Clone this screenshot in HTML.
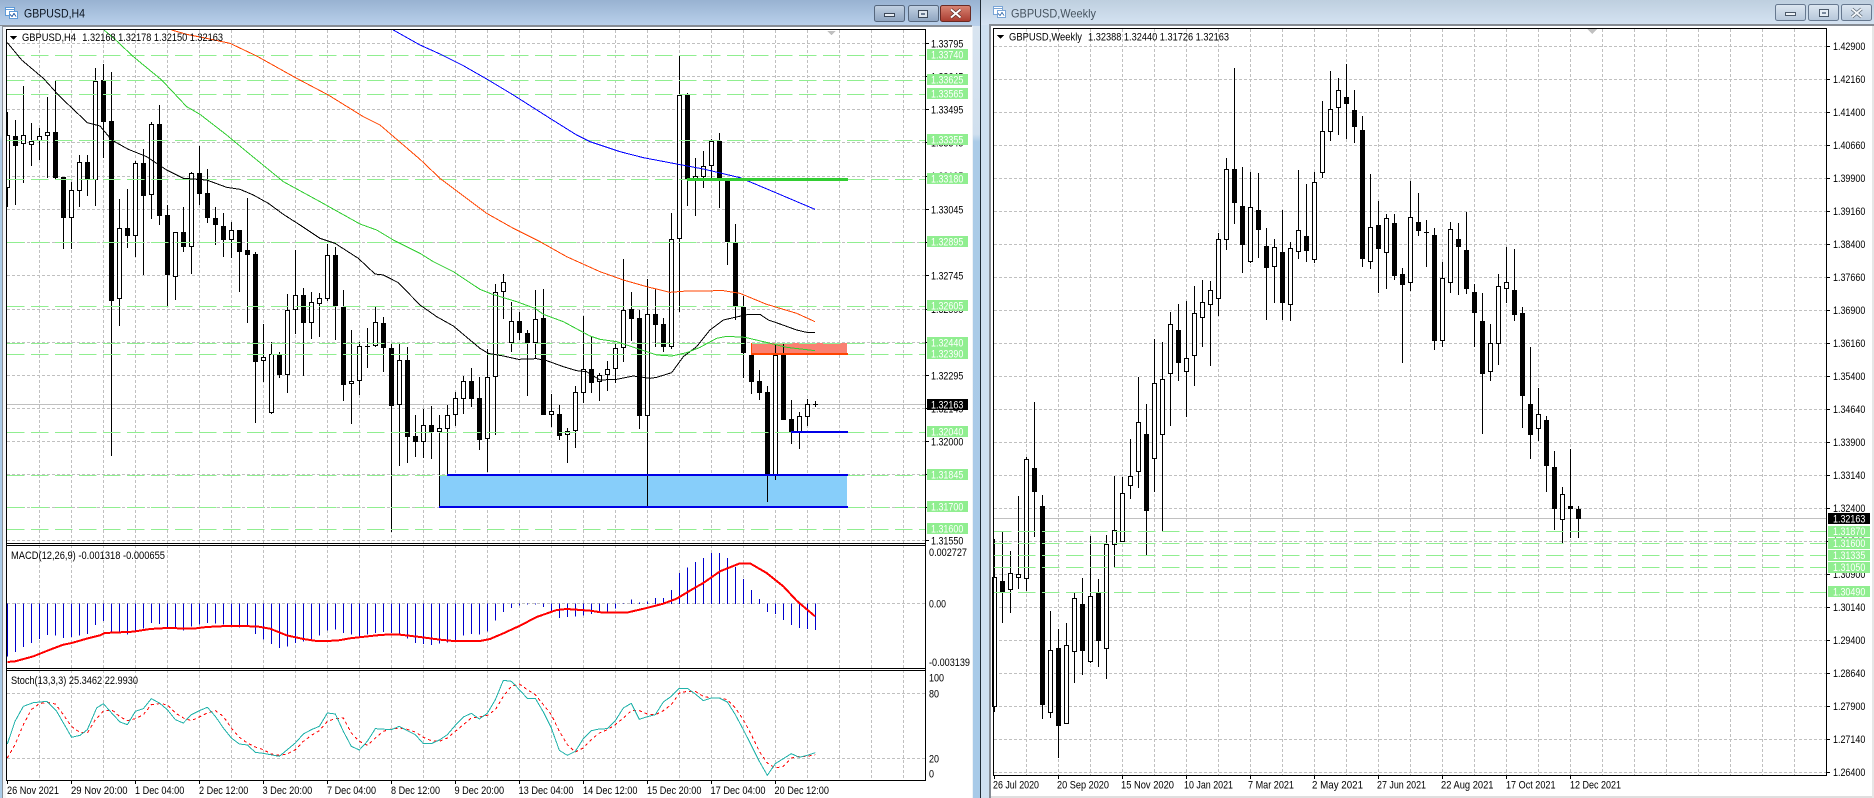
<!DOCTYPE html>
<html><head><meta charset="utf-8"><title>GBPUSD</title>
<style>html,body{margin:0;padding:0;background:#fff;width:1874px;height:798px;overflow:hidden}svg{display:block}text{font-family:"Liberation Sans",sans-serif;font-size:11px;fill:#000}.g text{fill:#fff}</style></head><body>
<svg width="1874" height="798" viewBox="0 0 1874 798" xmlns="http://www.w3.org/2000/svg">
<defs>
<linearGradient id="t1" x1="0" y1="0" x2="0" y2="1"><stop offset="0" stop-color="#98b2d1"/><stop offset="1" stop-color="#bad1eb"/></linearGradient>
<linearGradient id="t2" x1="0" y1="0" x2="0" y2="1"><stop offset="0" stop-color="#becfdf"/><stop offset="1" stop-color="#d5e3f2"/></linearGradient>
<linearGradient id="s" x1="0" y1="0" x2="0" y2="1"><stop offset="0" stop-color="#d8e4f0"/><stop offset=".14" stop-color="#d0dfee"/><stop offset=".15" stop-color="#abcbe7"/><stop offset="1" stop-color="#a8cae8"/></linearGradient>
<linearGradient id="b1" x1="0" y1="0" x2="0" y2="1"><stop offset="0" stop-color="#c3d2e3"/><stop offset="1" stop-color="#8ea4c0"/></linearGradient>
<linearGradient id="b2" x1="0" y1="0" x2="0" y2="1"><stop offset="0" stop-color="#dde7f1"/><stop offset="1" stop-color="#b6c7da"/></linearGradient>
<linearGradient id="b3" x1="0" y1="0" x2="0" y2="1"><stop offset="0" stop-color="#d98574"/><stop offset="1" stop-color="#a93c30"/></linearGradient>
</defs>
<rect width="1874" height="798" fill="#fff"/>
<!-- window chrome -->
<rect x="0" y="0" width="980" height="26" fill="url(#t1)"/>
<rect x="981" y="0" width="893" height="25" fill="url(#t2)"/>
<rect x="0" y="25" width="972" height="2" fill="#868c94"/>
<rect x="989" y="24" width="885" height="2" fill="#868c94"/>
<rect x="0" y="26" width="2" height="772" fill="url(#s)"/>
<rect x="2" y="26" width="1" height="772" fill="#8a9098"/>
<rect x="972" y="26" width="1" height="772" fill="#eef2f6"/>
<rect x="973" y="26" width="7" height="772" fill="url(#s)"/>
<rect x="980" y="0" width="1" height="798" fill="#1f2a33"/>
<rect x="981" y="25" width="8" height="773" fill="#cfe0f0"/>
<rect x="989" y="24" width="2" height="774" fill="#868c94"/>
<rect x="991" y="796" width="883" height="2" fill="#dfdfdf"/>
<rect x="1872" y="26" width="2" height="772" fill="#e6e6e6"/>
<!-- title icons -->
<g shape-rendering="crispEdges" fill="#fff" stroke="#5f9bd8"><rect x="5.5" y="7.5" width="9" height="8"/><rect x="9.5" y="11.5" width="8" height="7"/><path d="M6 9.5h8" fill="none"/><path d="M10 14.5l2 2 2-3 2 3" fill="none" stroke="#3f6fb0"/></g>
<g shape-rendering="crispEdges" fill="#fff" stroke="#7aa5d6"><rect x="993.5" y="6.5" width="9" height="8"/><rect x="997.5" y="10.5" width="8" height="7"/><path d="M994 8.5h8" fill="none"/><path d="M998 13.5l2 2 2-3 2 3" fill="none" stroke="#5a86bb"/></g>
<text x="24" y="17.5" style="font-size:12px;fill:#0b1420" textLength="61" lengthAdjust="spacingAndGlyphs">GBPUSD,H4</text>
<text x="1011" y="17.5" style="font-size:12px;fill:#46535f" textLength="85" lengthAdjust="spacingAndGlyphs">GBPUSD,Weekly</text>
<!-- buttons left -->
<rect x="874.5" y="5.5" width="30" height="16" rx="2" fill="url(#b1)" stroke="#56677d"/>
<rect x="908.5" y="5.5" width="30" height="16" rx="2" fill="url(#b1)" stroke="#56677d"/>
<rect x="940.5" y="5.5" width="30" height="16" rx="2" fill="url(#b3)" stroke="#6a2a24"/>
<rect x="884.5" y="13.5" width="10" height="3" fill="#e8eef5" stroke="#3b4757"/>
<rect x="918.5" y="10.5" width="9" height="7" fill="#dfe6ee" stroke="#3b4757"/><rect x="921" y="13" width="4" height="2" fill="#6b7c92"/>
<path d="M951 9.5l9.5 8M960.5 9.5l-9.5 8" stroke="#5a2a25" stroke-width="3.4" fill="none"/><path d="M951 9.5l9.5 8M960.5 9.5l-9.5 8" stroke="#fff" stroke-width="2" fill="none"/>
<!-- buttons right -->
<rect x="1775.5" y="4.5" width="30" height="16" rx="2" fill="url(#b2)" stroke="#66788f"/>
<rect x="1808.5" y="4.5" width="30" height="16" rx="2" fill="url(#b2)" stroke="#66788f"/>
<rect x="1841.5" y="4.5" width="30" height="16" rx="2" fill="url(#b2)" stroke="#66788f"/>
<rect x="1785.5" y="12.5" width="10" height="3" fill="#eef3f8" stroke="#4a5868"/>
<rect x="1819.5" y="9.5" width="9" height="7" fill="#e6edf4" stroke="#4a5868"/><rect x="1822" y="12" width="4" height="2" fill="#7a8a9e"/>
<path d="M1852 9l9.5 8M1861.5 9l-9.5 8" stroke="#55626f" stroke-width="3.2" fill="none"/><path d="M1852 9l9.5 8M1861.5 9l-9.5 8" stroke="#f4f7fa" stroke-width="1.8" fill="none"/>

<!-- LEFT CHART GRID -->
<g shape-rendering="crispEdges" fill="none">
<path stroke="#c0c0c0" stroke-dasharray="3 2" d="M39.5 30V780M71.5 30V780M103.5 30V780M135.5 30V780M167.5 30V780M199.5 30V780M231.5 30V780M263.5 30V780M295.5 30V780M327.5 30V780M359.5 30V780M391.5 30V780M423.5 30V780M455.5 30V780M487.5 30V780M519.5 30V780M551.5 30V780M583.5 30V780M615.5 30V780M647.5 30V780M679.5 30V780M711.5 30V780M743.5 30V780M775.5 30V780M807.5 30V780M839.5 30V780M871.5 30V780M903.5 30V780M7 43.5H925M7 76.5H925M7 109.5H925M7 142.5H925M7 176.5H925M7 209.5H925M7 242.5H925M7 275.5H925M7 309.5H925M7 342.5H925M7 375.5H925M7 408.5H925M7 441.5H925M7 474.5H925M7 507.5H925M7 540.5H925M7 603.5H925M7 693.5H925M7 758.5H925"/>
<path stroke="#c0c0c0" d="M7 404.5H925"/>
<rect x="439" y="475" width="408" height="32" fill="#87cefa"/>
<rect x="751" y="343" width="96" height="11" fill="#fa8072"/>
<!-- candles -->
<path stroke="#000" d="M7.5 112V207M15.5 120V205M23.5 86V183M31.5 123V166M39.5 128V160M47.5 97V178M55.5 81V179M63.5 177V249M71.5 182V249M79.5 155V207M87.5 155V196M95.5 68V206M103.5 64V158M111.5 72V456M119.5 199V326M127.5 189V248M135.5 161V257M143.5 149V275M151.5 122V219M159.5 105V225M167.5 205V307M175.5 232V300M183.5 207V252M191.5 172V274M199.5 146V205M207.5 169V223M215.5 207V245M223.5 213V257M231.5 222V258M239.5 230V292M247.5 198V323M255.5 252V423M263.5 324V382M271.5 342V414M279.5 352V378M287.5 294V393M295.5 250V334M303.5 288V376M311.5 292V339M319.5 293V337M327.5 244V301M335.5 247V340M343.5 290V401M351.5 330V424M359.5 342V395M367.5 328V368M365 346.5h5M375.5 307V347M383.5 317V372M391.5 343V532M399.5 344V466M407.5 347V463M415.5 415V457M423.5 409V458M431.5 406V459M439.5 415V507M447.5 405V475M455.5 392V426M463.5 376V414M471.5 368V407M479.5 377V450M487.5 349V472M495.5 284V435M503.5 274V319M511.5 302V352M519.5 312V340M527.5 330V396M535.5 290V359M543.5 289V415M551.5 394V427M559.5 405V440M567.5 428V463M575.5 386V448M583.5 316V403M591.5 337V393M599.5 373V401M607.5 361V391M615.5 344V383M623.5 259V362M631.5 292V341M639.5 310V429M647.5 279V506M655.5 289V347M663.5 318V352M671.5 213V349M679.5 56V312M687.5 93V206M695.5 158V216M703.5 151V188M711.5 139V180M719.5 133V208M727.5 181V265M735.5 224V320M743.5 296V378M751.5 343V394M759.5 370V400M767.5 386V502M775.5 343V480M783.5 343V420M791.5 400V444M799.5 412V449M807.5 399V426M815.5 401V407M813 404.5h5"/>
<path stroke="#000" stroke-width="5" d="M7.5 135V188M15.5 136V146M23.5 135V144M31.5 141V145M39.5 136V141M47.5 132V136M55.5 132V178M63.5 177V218M71.5 190V218M79.5 162V191M87.5 162V180M95.5 81V180M103.5 80V122M111.5 121V301M119.5 228V299M127.5 228V236M135.5 163V236M143.5 163V196M151.5 124V195M159.5 124V216M167.5 215V275M175.5 232V277M183.5 232V247M191.5 173V247M199.5 173V194M207.5 193V218M215.5 218V225M223.5 226V240M231.5 230V240M239.5 230V252M247.5 250V255M255.5 254V362M263.5 357V361M271.5 354V413M279.5 355V375M287.5 310V375M295.5 295V310M303.5 295V323M311.5 302V323M319.5 298V304M327.5 255V299M335.5 255V306M343.5 307V385M351.5 381V384M359.5 346V381M375.5 322V346M383.5 323V348M391.5 348V406M399.5 360V405M407.5 360V437M415.5 436V442M423.5 425V442M431.5 425V432M439.5 428V432M447.5 415V429M455.5 398V415M463.5 381V399M471.5 381V399M479.5 398V440M487.5 377V439M495.5 292V377M503.5 282V292M511.5 321V343M519.5 321V333M527.5 333V343M535.5 319V343M543.5 318V415M551.5 411V415M559.5 414V436M567.5 431V435M575.5 392V431M583.5 369V393M591.5 369V383M599.5 375V382M607.5 369V375M615.5 348V369M623.5 310V348M631.5 309V319M639.5 318V416M647.5 314V416M655.5 314V325M663.5 324V347M671.5 239V347M679.5 95V239M687.5 95V179M695.5 176V179M703.5 166V177M711.5 141V166M719.5 141V181M727.5 181V242M735.5 243V306M743.5 307V353M751.5 355V382M759.5 381V393M767.5 392V475M775.5 355V475M783.5 355V420M791.5 419V432M799.5 416V432M807.5 404V417"/>
<path stroke="#fff" stroke-width="3" d="M7.5 136V187M23.5 136V143M31.5 142V144M39.5 137V140M47.5 133V135M71.5 191V217M79.5 163V190M95.5 82V179M119.5 229V298M135.5 164V235M151.5 125V194M175.5 233V276M191.5 174V246M231.5 231V239M263.5 358V360M271.5 355V412M287.5 311V374M295.5 296V309M311.5 303V322M319.5 299V303M327.5 256V298M351.5 382V383M359.5 347V380M375.5 323V345M399.5 361V404M423.5 426V441M439.5 429V431M447.5 416V428M455.5 399V414M463.5 382V398M487.5 378V438M495.5 293V376M503.5 283V291M511.5 322V342M535.5 320V342M551.5 412V414M567.5 432V434M575.5 393V430M583.5 370V392M599.5 376V381M607.5 370V374M615.5 349V368M623.5 311V347M647.5 315V415M671.5 240V346M679.5 96V238M695.5 177V178M703.5 167V176M711.5 142V165M775.5 356V474M799.5 417V431M807.5 405V416"/>
<!-- levels -->
<path stroke="#90ee90" stroke-dasharray="17.5 6.5" d="M7 55.5H925M7 80.5H925M7 94.5H925M7 140.5H925M7 179.5H925M7 242.5H925M7 306.5H925M7 343.5H925M7 354.5H925M7 432.5H925M7 475.5H925M7 507.5H925M7 529.5H925"/>
<!-- MAs (zoom-space) -->
<g transform="scale(.33333)" stroke-width="3" stroke-linejoin="round">
<polyline stroke="#000" points="22,128 65,180 130,235 180,290 262,368 300,378 335,420 385,448 440,470 500,510 550,535 620,540 680,562 720,568 760,585 805,610 850,643 900,675 960,715 1005,730 1075,775 1125,822 1150,825 1195,848 1260,915 1310,950 1360,978 1410,1020 1440,1045 1465,1060 1510,1068 1555,1078 1610,1076 1640,1082 1690,1100 1730,1112 1760,1115 1800,1140 1850,1138 1900,1128 1950,1135 1970,1132 2015,1118 2050,1070 2090,1040 2130,990 2170,960 2205,952 2245,943 2280,943 2305,960 2340,972 2390,990 2420,997 2445,997"/>
<polyline stroke="#32cd32" points="312,90 345,118 400,170 485,240 560,320 600,343 680,405 740,455 850,545 960,605 1080,672 1130,690 1180,720 1260,760 1300,785 1360,815 1440,868 1475,882 1550,905 1605,925 1630,943 1690,965 1770,1008 1800,1018 1850,1025 1910,1045 1970,1065 2015,1068 2060,1058 2100,1042 2150,1015 2180,1009 2235,1012 2290,1025 2360,1042 2445,1052"/>
<polyline stroke="#ff4500" points="515,90 560,103 620,115 690,130 770,168 890,235 985,285 1090,350 1140,375 1210,435 1260,478 1320,535 1380,580 1460,640 1540,685 1620,725 1700,770 1800,815 1870,840 1940,860 2010,877 2060,873 2170,872 2220,880 2300,913 2390,940 2445,965"/>
<polyline stroke="#0000ff" points="1180,90 1260,135 1320,162 1390,197 1460,237 1540,285 1650,355 1730,405 1770,425 1860,455 1930,473 2030,492 2110,507 2220,533 2320,575 2445,628"/>
</g>
<!-- objects -->
<rect x="687" y="178" width="161" height="3" fill="#32cd32"/>
<rect x="751" y="353" width="97" height="2" fill="#ff4500"/><rect x="751" y="343" width="1" height="11" fill="#ff4500"/>
<rect x="447" y="474" width="401" height="2" fill="#0000e6"/>
<rect x="439" y="506" width="409" height="2" fill="#0000e6"/>
<rect x="791" y="431" width="57" height="2" fill="#0000e6"/>
<!-- MACD + Stoch -->
<g transform="translate(0,528) scale(.33333)" stroke-width="3">
<path stroke="#0000cd" d="M22.5 226V385M46.5 226V372M70.5 226V357M94.5 226V345M118.5 226V333M142.5 226V321M166.5 226V323M190.5 226V330M214.5 226V327M238.5 226V322M262.5 226V318M286.5 226V291M310.5 226V279M334.5 226V310M358.5 226V310M382.5 226V320M406.5 226V312M430.5 226V302M454.5 226V285M478.5 226V288M502.5 226V298M526.5 226V302M550.5 226V308M574.5 226V295M598.5 226V290M622.5 226V285M646.5 226V287M670.5 226V290M694.5 226V292M718.5 226V298M742.5 226V292M766.5 226V318M790.5 226V335M814.5 226V348M838.5 226V360M862.5 226V355M886.5 226V345M910.5 226V340M934.5 226V335M958.5 226V323M982.5 226V308M1006.5 226V305M1030.5 226V315M1054.5 226V320M1078.5 226V325M1102.5 226V320M1126.5 226V315M1150.5 226V312M1174.5 226V315M1198.5 226V322M1222.5 226V332M1246.5 226V345M1270.5 226V348M1294.5 226V351M1318.5 226V347M1342.5 226V344M1366.5 226V342M1390.5 226V323M1414.5 226V318M1438.5 226V320M1462.5 226V310M1486.5 226V278M1510.5 226V252M1534.5 226V240M1558.5 226V232M1582.5 226V229M1606.5 226V229M1630.5 226V237M1654.5 226V250M1678.5 226V270M1702.5 226V267M1726.5 226V265M1750.5 226V262M1774.5 226V258M1798.5 226V250M1822.5 226V250M1846.5 226V241M1870.5 226V228M1894.5 228V215M1918.5 228V224M1942.5 228V220M1966.5 228V210M1990.5 228V210M2014.5 228V186M2038.5 228V135M2062.5 228V118M2086.5 228V102M2110.5 228V90M2134.5 228V75M2158.5 228V75M2182.5 228V90M2206.5 228V117M2230.5 228V153M2254.5 228V186M2278.5 228V213M2302.5 226V252M2326.5 226V258M2350.5 226V276M2374.5 226V291M2398.5 226V300M2422.5 226V303M2446.5 226V306"/>
<polyline stroke="#ff0000" stroke-width="6" points="22,402 45,400 100,385 150,365 190,350 215,345 260,332 300,322 315,315 400,311 450,303 500,300 580,302 620,297 680,294 770,295 810,302 860,322 910,333 950,339 1010,338 1050,331 1130,322 1170,319 1200,320 1260,327 1320,335 1360,339 1440,339 1470,333 1510,316 1560,293 1610,267 1670,246 1700,243 1770,248 1810,254 1880,254 1940,240 1990,227 2030,212 2080,182 2110,165 2160,130 2220,106 2250,106 2300,135 2350,175 2390,218 2445,265"/>
<polyline stroke="#ff0000" stroke-dasharray="9 9" points="22,690 45,650 70,590 94,545 118,527 142,523 166,528 190,560 214,595 238,612 262,615 286,575 310,550 335,545 358,565 382,578 406,572 430,560 454,530 478,527 502,530 526,555 550,570 574,578 598,567 622,555 646,548 670,565 694,600 718,628 742,645 766,657 790,665 814,678 838,682 862,678 886,665 910,640 934,622 958,608 982,580 1006,572 1030,570 1054,615 1078,640 1102,652 1126,630 1150,610 1174,603 1198,600 1222,604 1246,612 1270,628 1294,638 1318,640 1342,630 1366,610 1390,590 1414,570 1438,567 1462,562 1486,545 1510,505 1534,475 1558,468 1582,485 1606,500 1630,530 1654,560 1678,610 1702,650 1726,672 1750,660 1774,635 1798,615 1822,605 1846,590 1870,570 1894,548 1918,548 1942,558 1966,560 1990,548 2014,530 2038,495 2062,490 2086,490 2110,505 2134,510 2158,510 2182,515 2206,540 2230,575 2254,620 2278,670 2302,705 2326,720 2350,715 2374,690 2398,685 2422,685 2446,680"/>
<polyline stroke="#20b2aa" points="22,648 45,580 70,535 100,524 140,520 170,550 215,628 240,622 262,605 290,540 310,527 335,555 360,582 382,590 406,550 430,542 454,512 478,525 502,545 526,575 550,585 574,560 598,548 622,538 646,565 670,600 694,630 718,648 742,651 766,673 790,676 838,685 862,665 886,645 910,618 934,605 958,595 982,555 1006,558 1030,610 1054,655 1078,666 1102,640 1126,602 1174,605 1198,595 1222,608 1246,620 1270,647 1294,647 1318,636 1342,620 1366,592 1390,567 1414,556 1438,573 1462,556 1486,515 1510,457 1534,460 1558,485 1582,511 1606,511 1630,552 1654,600 1678,667 1702,682 1726,670 1750,632 1774,608 1798,603 1822,602 1846,578 1870,540 1894,526 1918,574 1942,566 1966,560 1990,522 2014,505 2038,481 2062,481 2086,498 2110,518 2134,510 2158,510 2182,522 2206,560 2230,605 2254,652 2278,700 2302,742 2326,707 2350,692 2374,677 2398,688 2422,682 2446,674"/>
</g>
<!-- frames -->
<path stroke="#000" d="M6.5 29V781M925.5 29V781M6 29.5H926M6 543.5H926M6 545.5H926M6 668.5H926M6 670.5H926M6 780.5H926"/>
<rect x="3" y="27" width="3" height="771" fill="#f4f6f8"/>
<path stroke="#000" d="M925 43.5h4M925 76.5h4M925 109.5h4M925 142.5h4M925 176.5h4M925 209.5h4M925 242.5h4M925 275.5h4M925 309.5h4M925 342.5h4M925 375.5h4M925 408.5h4M925 441.5h4M925 474.5h4M925 507.5h4M925 540.5h4M7.5 781v3M71.5 781v3M135.5 781v3M199.5 781v3M263.5 781v3M327.5 781v3M391.5 781v3M455.5 781v3M519.5 781v3M583.5 781v3M647.5 781v3M711.5 781v3M775.5 781v3"/>
<path d="M10 36h7l-3.5 4z" fill="#000" stroke="none"/>
<path d="M827 31h9l-4.5 4z" fill="#c0c0c0" stroke="none"/>
</g>
<!-- left text -->
<text x="22" y="41" textLength="54" lengthAdjust="spacingAndGlyphs">GBPUSD,H4</text>
<text x="82.3" y="41" textLength="140.7" lengthAdjust="spacingAndGlyphs">1.32168 1.32178 1.32150 1.32163</text>
<text x="11" y="559" textLength="154" lengthAdjust="spacingAndGlyphs">MACD(12,26,9) -0.001318 -0.000655</text>
<text x="11" y="684" textLength="127" lengthAdjust="spacingAndGlyphs">Stoch(13,3,3) 25.3462 22.9930</text>
<g>
<text x="931" y="47.5" textLength="32.3" lengthAdjust="spacingAndGlyphs">1.33795</text>
<text x="931" y="80.5" textLength="32.3" lengthAdjust="spacingAndGlyphs">1.33645</text>
<text x="931" y="113.5" textLength="32.3" lengthAdjust="spacingAndGlyphs">1.33495</text>
<text x="931" y="146.5" textLength="32.3" lengthAdjust="spacingAndGlyphs">1.33345</text>
<text x="931" y="180" textLength="32.3" lengthAdjust="spacingAndGlyphs">1.33195</text>
<text x="931" y="213.5" textLength="32.3" lengthAdjust="spacingAndGlyphs">1.33045</text>
<text x="931" y="246.5" textLength="32.3" lengthAdjust="spacingAndGlyphs">1.32895</text>
<text x="931" y="279.5" textLength="32.3" lengthAdjust="spacingAndGlyphs">1.32745</text>
<text x="931" y="313" textLength="32.3" lengthAdjust="spacingAndGlyphs">1.32595</text>
<text x="931" y="346" textLength="32.3" lengthAdjust="spacingAndGlyphs">1.32445</text>
<text x="931" y="379.5" textLength="32.3" lengthAdjust="spacingAndGlyphs">1.32295</text>
<text x="931" y="412.5" textLength="32.3" lengthAdjust="spacingAndGlyphs">1.32145</text>
<text x="931" y="445.5" textLength="32.3" lengthAdjust="spacingAndGlyphs">1.32000</text>
<text x="931" y="478.5" textLength="32.3" lengthAdjust="spacingAndGlyphs">1.31850</text>
<text x="931" y="511.5" textLength="32.3" lengthAdjust="spacingAndGlyphs">1.31700</text>
<text x="931" y="544.5" textLength="32.3" lengthAdjust="spacingAndGlyphs">1.31550</text>
<text x="929" y="556" textLength="38" lengthAdjust="spacingAndGlyphs">0.002727</text>
<text x="929" y="607.5" textLength="17" lengthAdjust="spacingAndGlyphs">0.00</text>
<text x="929" y="666" textLength="41" lengthAdjust="spacingAndGlyphs">-0.003139</text>
<text x="929" y="681.5" textLength="15" lengthAdjust="spacingAndGlyphs">100</text>
<text x="929" y="697.5" textLength="10" lengthAdjust="spacingAndGlyphs">80</text>
<text x="929" y="762.5" textLength="10" lengthAdjust="spacingAndGlyphs">20</text>
<text x="929" y="777.5" textLength="5" lengthAdjust="spacingAndGlyphs">0</text>
<text x="7" y="794" textLength="52" lengthAdjust="spacingAndGlyphs">26 Nov 2021</text>
<text x="71" y="794" textLength="56.6" lengthAdjust="spacingAndGlyphs">29 Nov 20:00</text>
<text x="135" y="794" textLength="49.3" lengthAdjust="spacingAndGlyphs">1 Dec 04:00</text>
<text x="199" y="794" textLength="49.3" lengthAdjust="spacingAndGlyphs">2 Dec 12:00</text>
<text x="262.5" y="794" textLength="49.7" lengthAdjust="spacingAndGlyphs">3 Dec 20:00</text>
<text x="327" y="794" textLength="49" lengthAdjust="spacingAndGlyphs">7 Dec 04:00</text>
<text x="391" y="794" textLength="49" lengthAdjust="spacingAndGlyphs">8 Dec 12:00</text>
<text x="454.5" y="794" textLength="49.6" lengthAdjust="spacingAndGlyphs">9 Dec 20:00</text>
<text x="518.5" y="794" textLength="55" lengthAdjust="spacingAndGlyphs">13 Dec 04:00</text>
<text x="583" y="794" textLength="54.5" lengthAdjust="spacingAndGlyphs">14 Dec 12:00</text>
<text x="647" y="794" textLength="54.5" lengthAdjust="spacingAndGlyphs">15 Dec 20:00</text>
<text x="710.5" y="794" textLength="55" lengthAdjust="spacingAndGlyphs">17 Dec 04:00</text>
<text x="774.5" y="794" textLength="54.5" lengthAdjust="spacingAndGlyphs">20 Dec 12:00</text>
</g>
<g fill="#90ee90" shape-rendering="crispEdges"><rect x="927" y="49" width="41" height="11"/><rect x="927" y="74" width="41" height="11"/><rect x="927" y="88" width="41" height="11"/><rect x="927" y="134" width="41" height="11"/><rect x="927" y="173" width="41" height="11"/><rect x="927" y="236" width="41" height="11"/><rect x="927" y="300" width="41" height="11"/><rect x="927" y="337" width="41" height="11"/><rect x="927" y="348" width="41" height="11"/><rect x="927" y="426" width="41" height="11"/><rect x="927" y="469" width="41" height="11"/><rect x="927" y="501" width="41" height="11"/><rect x="927" y="523" width="41" height="11"/><rect x="927" y="399" width="41" height="11" fill="#000"/></g>
<g class="g">
<text x="931" y="58.5" textLength="32.3" lengthAdjust="spacingAndGlyphs">1.33740</text>
<text x="931" y="83.5" textLength="32.3" lengthAdjust="spacingAndGlyphs">1.33625</text>
<text x="931" y="97.5" textLength="32.3" lengthAdjust="spacingAndGlyphs">1.33565</text>
<text x="931" y="143.5" textLength="32.3" lengthAdjust="spacingAndGlyphs">1.33355</text>
<text x="931" y="182.5" textLength="32.3" lengthAdjust="spacingAndGlyphs">1.33180</text>
<text x="931" y="245.5" textLength="32.3" lengthAdjust="spacingAndGlyphs">1.32895</text>
<text x="931" y="309.5" textLength="32.3" lengthAdjust="spacingAndGlyphs">1.32605</text>
<text x="931" y="346.5" textLength="32.3" lengthAdjust="spacingAndGlyphs">1.32440</text>
<text x="931" y="357.5" textLength="32.3" lengthAdjust="spacingAndGlyphs">1.32390</text>
<text x="931" y="408.5" textLength="32.3" lengthAdjust="spacingAndGlyphs">1.32163</text>
<text x="931" y="435.5" textLength="32.3" lengthAdjust="spacingAndGlyphs">1.32040</text>
<text x="931" y="478.5" textLength="32.3" lengthAdjust="spacingAndGlyphs">1.31845</text>
<text x="931" y="510.5" textLength="32.3" lengthAdjust="spacingAndGlyphs">1.31700</text>
<text x="931" y="532.5" textLength="32.3" lengthAdjust="spacingAndGlyphs">1.31600</text>
</g>

<!-- RIGHT CHART -->
<g shape-rendering="crispEdges" fill="none">
<path stroke="#c0c0c0" stroke-dasharray="3 2" d="M1026.5 29V775M1058.5 29V775M1090.5 29V775M1122.5 29V775M1154.5 29V775M1186.5 29V775M1218.5 29V775M1250.5 29V775M1282.5 29V775M1314.5 29V775M1346.5 29V775M1378.5 29V775M1410.5 29V775M1442.5 29V775M1474.5 29V775M1506.5 29V775M1538.5 29V775M1570.5 29V775M1602.5 29V775M1634.5 29V775M1666.5 29V775M1698.5 29V775M1730.5 29V775M1762.5 29V775M1794.5 29V775M994 46.5H1826M994 79.5H1826M994 112.5H1826M994 145.5H1826M994 178.5H1826M994 211.5H1826M994 244.5H1826M994 277.5H1826M994 310.5H1826M994 343.5H1826M994 376.5H1826M994 409.5H1826M994 442.5H1826M994 475.5H1826M994 508.5H1826M994 541.5H1826M994 574.5H1826M994 607.5H1826M994 640.5H1826M994 673.5H1826M994 706.5H1826M994 739.5H1826M994 772.5H1826"/>
<path stroke="#c0c0c0" d="M994 518.5H1826"/>
<path stroke="#000" d="M994.5 539V712M1002.5 532V623M1010.5 551V613M1018.5 496V589M1026.5 457V591M1034.5 402V537M1042.5 495V719M1050.5 611V718M1058.5 629V758M1066.5 623V724M1074.5 593V683M1082.5 578V675M1090.5 536V663M1098.5 579V667M1106.5 535V679M1114.5 476V567M1122.5 477V542M1130.5 439V499M1138.5 377V488M1146.5 404V555M1154.5 339V492M1162.5 342V531M1170.5 312V426M1178.5 304V381M1186.5 301V417M1194.5 286V386M1202.5 280V347M1210.5 281V366M1218.5 233V316M1226.5 158V250M1234.5 68V224M1242.5 167V273M1250.5 172V263M1258.5 173V258M1266.5 228V320M1274.5 239V303M1282.5 210V320M1290.5 242V321M1298.5 170V259M1306.5 184V262M1314.5 172V263M1322.5 101V178M1330.5 71V141M1338.5 78V135M1346.5 64V139M1354.5 90V143M1362.5 116V267M1370.5 174V269M1378.5 201V293M1386.5 214V289M1394.5 214V280M1402.5 268V363M1410.5 181V291M1418.5 193V236M1426.5 220V267M1424 232.5h5M1434.5 228V350M1442.5 262V347M1450.5 222V293M1458.5 223V295M1466.5 212V294M1474.5 284V347M1482.5 293V434M1490.5 324V381M1498.5 274V365M1506.5 247V303M1514.5 249V321M1522.5 307V428M1530.5 347V459M1538.5 388V441M1546.5 416V492M1554.5 451V530M1562.5 487V543M1570.5 449V538M1578.5 506V538"/>
<path stroke="#000" stroke-width="5" d="M994.5 577V707M1002.5 581V592M1010.5 573V590M1018.5 574V578M1026.5 459V579M1034.5 468V492M1042.5 506V705M1050.5 650V713M1058.5 648V726M1066.5 645V724M1074.5 598V652M1082.5 604V651M1090.5 596V662M1098.5 593V641M1106.5 544V649M1114.5 530V545M1122.5 493V542M1130.5 476V486M1138.5 422V472M1146.5 434V511M1154.5 383V459M1162.5 379V435M1170.5 324V374M1178.5 330V363M1186.5 358V372M1194.5 313V356M1202.5 302V318M1210.5 290V305M1218.5 239V299M1226.5 169V240M1234.5 169V203M1242.5 206V245M1250.5 207V262M1258.5 210V230M1266.5 246V268M1274.5 247V267M1282.5 252V303M1290.5 248V305M1298.5 230V252M1306.5 236V251M1314.5 182V260M1322.5 131V173M1330.5 109V132M1338.5 90V108M1346.5 97V104M1354.5 110V127M1362.5 130V259M1370.5 227V262M1378.5 225V249M1386.5 218V253M1394.5 223V276M1402.5 274V285M1410.5 217V283M1418.5 222V231M1434.5 235V341M1442.5 278V341M1450.5 229V283M1458.5 239V247M1466.5 250V289M1474.5 292V313M1482.5 321V374M1490.5 343V372M1498.5 286V344M1506.5 282V289M1514.5 290V315M1522.5 313V396M1530.5 404V435M1538.5 414V429M1546.5 420V466M1554.5 467V509M1562.5 494V520M1570.5 506V509M1578.5 509V519"/>
<path stroke="#fff" stroke-width="3" d="M994.5 578V706M1010.5 574V589M1018.5 575V577M1026.5 460V578M1050.5 651V712M1066.5 646V723M1074.5 599V651M1090.5 597V661M1106.5 545V648M1114.5 531V544M1122.5 494V541M1130.5 477V485M1138.5 423V471M1154.5 384V458M1162.5 380V434M1170.5 325V373M1186.5 359V371M1194.5 314V355M1202.5 303V317M1210.5 291V304M1218.5 240V298M1226.5 170V239M1250.5 208V261M1274.5 248V266M1290.5 249V304M1298.5 231V251M1314.5 183V259M1322.5 132V172M1330.5 110V131M1338.5 91V107M1370.5 228V261M1386.5 219V252M1410.5 218V282M1442.5 279V340M1450.5 230V282M1490.5 344V371M1498.5 287V343M1506.5 283V288M1538.5 415V428M1562.5 495V519"/>
<path stroke="#90ee90" stroke-dasharray="17.5 6.5" d="M994 531.5H1826M994 543.5H1826M994 555.5H1826M994 567.5H1826M994 592.5H1826"/>
<path stroke="#000" d="M993.5 28V776M1826.5 28V776M993 28.5H1827M993 775.5H1827M1826 46.5h4M1826 79.5h4M1826 112.5h4M1826 145.5h4M1826 178.5h4M1826 211.5h4M1826 244.5h4M1826 277.5h4M1826 310.5h4M1826 343.5h4M1826 376.5h4M1826 409.5h4M1826 442.5h4M1826 475.5h4M1826 508.5h4M1826 541.5h4M1826 574.5h4M1826 607.5h4M1826 640.5h4M1826 673.5h4M1826 706.5h4M1826 739.5h4M1826 772.5h4M994.5 776v3M1058.5 776v3M1122.5 776v3M1186.5 776v3M1250.5 776v3M1314.5 776v3M1378.5 776v3M1442.5 776v3M1506.5 776v3M1570.5 776v3"/>
<path d="M997 35h7l-3.5 4z" fill="#000" stroke="none"/>
<path d="M1587 29h10l-5 5z" fill="#c0c0c0" stroke="none"/>
</g>
<text x="1009" y="40.5" textLength="73" lengthAdjust="spacingAndGlyphs">GBPUSD,Weekly</text>
<text x="1088" y="40.5" textLength="141" lengthAdjust="spacingAndGlyphs">1.32388 1.32440 1.31726 1.32163</text>
<g>
<text x="1833" y="50" textLength="32.3" lengthAdjust="spacingAndGlyphs">1.42900</text>
<text x="1833" y="83" textLength="32.3" lengthAdjust="spacingAndGlyphs">1.42160</text>
<text x="1833" y="116" textLength="32.3" lengthAdjust="spacingAndGlyphs">1.41400</text>
<text x="1833" y="149" textLength="32.3" lengthAdjust="spacingAndGlyphs">1.40660</text>
<text x="1833" y="182" textLength="32.3" lengthAdjust="spacingAndGlyphs">1.39900</text>
<text x="1833" y="215" textLength="32.3" lengthAdjust="spacingAndGlyphs">1.39160</text>
<text x="1833" y="248" textLength="32.3" lengthAdjust="spacingAndGlyphs">1.38400</text>
<text x="1833" y="281" textLength="32.3" lengthAdjust="spacingAndGlyphs">1.37660</text>
<text x="1833" y="314" textLength="32.3" lengthAdjust="spacingAndGlyphs">1.36900</text>
<text x="1833" y="347" textLength="32.3" lengthAdjust="spacingAndGlyphs">1.36160</text>
<text x="1833" y="380" textLength="32.3" lengthAdjust="spacingAndGlyphs">1.35400</text>
<text x="1833" y="413" textLength="32.3" lengthAdjust="spacingAndGlyphs">1.34640</text>
<text x="1833" y="446" textLength="32.3" lengthAdjust="spacingAndGlyphs">1.33900</text>
<text x="1833" y="479" textLength="32.3" lengthAdjust="spacingAndGlyphs">1.33140</text>
<text x="1833" y="512" textLength="32.3" lengthAdjust="spacingAndGlyphs">1.32400</text>
<text x="1833" y="545" textLength="32.3" lengthAdjust="spacingAndGlyphs">1.31640</text>
<text x="1833" y="578" textLength="32.3" lengthAdjust="spacingAndGlyphs">1.30900</text>
<text x="1833" y="611" textLength="32.3" lengthAdjust="spacingAndGlyphs">1.30140</text>
<text x="1833" y="644" textLength="32.3" lengthAdjust="spacingAndGlyphs">1.29400</text>
<text x="1833" y="677" textLength="32.3" lengthAdjust="spacingAndGlyphs">1.28640</text>
<text x="1833" y="710" textLength="32.3" lengthAdjust="spacingAndGlyphs">1.27900</text>
<text x="1833" y="743" textLength="32.3" lengthAdjust="spacingAndGlyphs">1.27140</text>
<text x="1833" y="776" textLength="32.3" lengthAdjust="spacingAndGlyphs">1.26400</text>
<text x="993" y="788.5" textLength="46" lengthAdjust="spacingAndGlyphs">26 Jul 2020</text>
<text x="1057" y="788.5" textLength="52" lengthAdjust="spacingAndGlyphs">20 Sep 2020</text>
<text x="1121" y="788.5" textLength="53" lengthAdjust="spacingAndGlyphs">15 Nov 2020</text>
<text x="1184" y="788.5" textLength="49" lengthAdjust="spacingAndGlyphs">10 Jan 2021</text>
<text x="1248" y="788.5" textLength="46" lengthAdjust="spacingAndGlyphs">7 Mar 2021</text>
<text x="1312" y="788.5" textLength="51" lengthAdjust="spacingAndGlyphs">2 May 2021</text>
<text x="1377" y="788.5" textLength="49" lengthAdjust="spacingAndGlyphs">27 Jun 2021</text>
<text x="1441" y="788.5" textLength="52.5" lengthAdjust="spacingAndGlyphs">22 Aug 2021</text>
<text x="1506" y="788.5" textLength="49.5" lengthAdjust="spacingAndGlyphs">17 Oct 2021</text>
<text x="1570" y="788.5" textLength="51" lengthAdjust="spacingAndGlyphs">12 Dec 2021</text>
</g>
<g fill="#90ee90" shape-rendering="crispEdges"><rect x="1828" y="526" width="42" height="11"/><rect x="1828" y="538" width="42" height="11"/><rect x="1828" y="550" width="42" height="11"/><rect x="1828" y="562" width="42" height="11"/><rect x="1828" y="586" width="42" height="11"/><rect x="1828" y="513" width="42" height="11" fill="#000"/></g>
<g class="g">
<text x="1833" y="522.5" textLength="32.3" lengthAdjust="spacingAndGlyphs">1.32163</text>
<text x="1833" y="535" textLength="32.3" lengthAdjust="spacingAndGlyphs">1.31870</text>
<text x="1833" y="547" textLength="32.3" lengthAdjust="spacingAndGlyphs">1.31600</text>
<text x="1833" y="559" textLength="32.3" lengthAdjust="spacingAndGlyphs">1.31335</text>
<text x="1833" y="571" textLength="32.3" lengthAdjust="spacingAndGlyphs">1.31050</text>
<text x="1833" y="595.5" textLength="32.3" lengthAdjust="spacingAndGlyphs">1.30490</text>
</g>
</svg>
</body></html>
